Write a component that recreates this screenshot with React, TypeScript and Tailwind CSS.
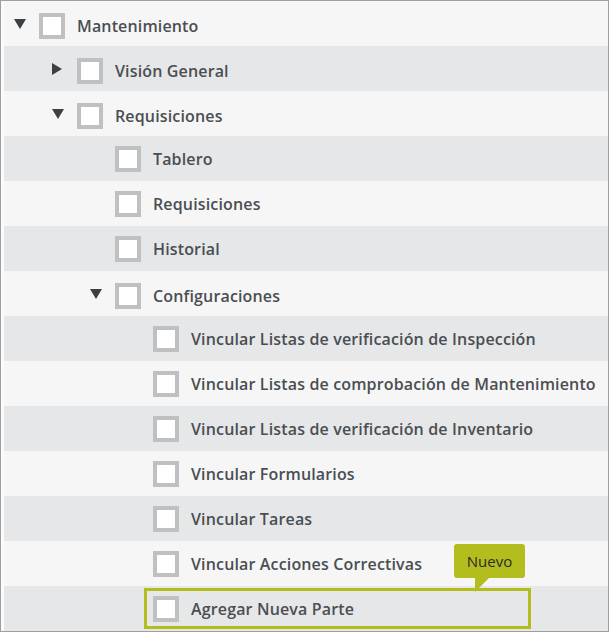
import React from "react";

type Row = { label: string; level: number; arrow?: "down" | "right" };

const rows: Row[] = [
  { label: "Mantenimiento", level: 0, arrow: "down" },
  { label: "Visión General", level: 1, arrow: "right" },
  { label: "Requisiciones", level: 1, arrow: "down" },
  { label: "Tablero", level: 2 },
  { label: "Requisiciones", level: 2 },
  { label: "Historial", level: 2 },
  { label: "Configuraciones", level: 2, arrow: "down" },
  { label: "Vincular Listas de verificación de Inspección", level: 3 },
  { label: "Vincular Listas de comprobación de Mantenimiento", level: 3 },
  { label: "Vincular Listas de verificación de Inventario", level: 3 },
  { label: "Vincular Formularios", level: 3 },
  { label: "Vincular Tareas", level: 3 },
  { label: "Vincular Acciones Correctivas", level: 3 },
  { label: "Agregar Nueva Parte", level: 3 },
];

function Arrow({ dir }: { dir: "down" | "right" }) {
  if (dir === "down") {
    return (
      <svg width="12" height="10" viewBox="0 0 12 10" className="block">
        <polygon points="0,0 12,0 6,10" fill="#3c4145" />
      </svg>
    );
  }
  return (
    <svg width="10" height="12" viewBox="0 0 10 12" className="block">
      <polygon points="0,0 10,6 0,12" fill="#3c4145" />
    </svg>
  );
}

export default function App() {
  return (
    <div
      className="w-[609px] h-[632px] border border-[#9f9f9f] bg-[#fbfbfb] pl-[3px] overflow-hidden"
      style={{ fontFamily: '"Open Sans", "Liberation Sans", sans-serif' }}
    >
      {rows.map((r, i) => {
        const last = i === rows.length - 1;
        return (
          <div
            key={i}
            className={`relative flex items-center h-[45px] ${i % 2 === 0 ? "bg-[#f6f6f6]" : "bg-[#e6e7e8]"}`}
          >
            <div
              className={
                r.level === 0
                  ? "w-[35px] shrink-0"
                  : r.level === 1
                  ? "w-[73px] shrink-0"
                  : r.level === 2
                  ? "w-[111px] shrink-0"
                  : "w-[149px] shrink-0"
              }
            >
              {r.arrow && (
                <div
                  className={
                    r.level === 0
                      ? "pl-[10px]"
                      : r.level === 1
                      ? "pl-[48px]"
                      : "pl-[86px]"
                  }
                >
                  <Arrow dir={r.arrow} />
                </div>
              )}
            </div>
            <div className={`flex items-center ${r.arrow ? "mt-[5px]" : "mt-0"}`}>
              <div className="w-[26px] h-[26px] shrink-0 border-[4px] border-[#bfc0c2] bg-white" />
              <span className="ml-[12px] text-[16px] font-semibold tracking-[0.15px] text-[#4a4e52] leading-none whitespace-nowrap">
                {r.label}
              </span>
            </div>
            {last && (
              <>
                <div className="absolute left-[140px] top-[2px] w-[387px] h-[41px] border-[3px] border-[#b3bd1e]" />
                <div className="absolute left-[450px] top-[-42px] w-[71px] h-[34px] rounded-[3px] bg-[#b3bd1e] flex items-center justify-center text-[15px] text-[#2b2b2b] font-normal">
                  Nuevo
                  <svg
                    width="15"
                    height="15"
                    viewBox="0 0 15 15"
                    className="absolute left-[21px] top-[33px]"
                  >
                    <polygon points="0,0 15,0 0,15" fill="#b3bd1e" />
                  </svg>
                </div>
              </>
            )}
          </div>
        );
      })}
    </div>
  );
}
